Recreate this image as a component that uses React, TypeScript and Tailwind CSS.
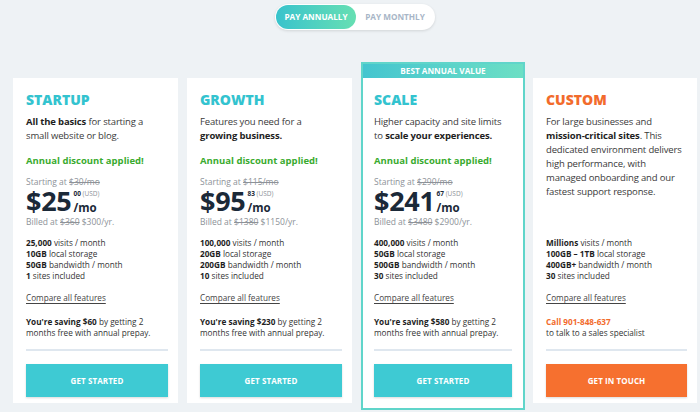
import React from 'react';

type Plan = {
  name: string;
  color: 'teal' | 'orange';
  desc: React.ReactNode;
  price?: { was: string; dollars: string; cents: string; billedWas: string; billed: string };
  features: [string, string][];
  footer: React.ReactNode;
  cta: string;
  featured?: boolean;
};

const plans: Plan[] = [
  {
    name: 'STARTUP',
    color: 'teal',
    desc: (
      <>
        <b className="font-bold text-[#1e1e1e]">All the basics</b> for starting a small website or blog.
      </>
    ),
    price: { was: '$30/mo', dollars: '$25', cents: '00', billedWas: '$360', billed: '$300/yr.' },
    features: [
      ['25,000', 'visits / month'],
      ['10GB', 'local storage'],
      ['50GB', 'bandwidth / month'],
      ['1', 'sites included'],
    ],
    footer: (
      <>
        <b className="font-bold text-[#1e1e1e]">You're saving $60</b> by getting 2 months free with annual prepay.
      </>
    ),
    cta: 'GET STARTED',
  },
  {
    name: 'GROWTH',
    color: 'teal',
    desc: (
      <>
        Features you need for a
        <br />
        <b className="font-bold text-[#1e1e1e]">growing business.</b>
      </>
    ),
    price: { was: '$115/mo', dollars: '$95', cents: '83', billedWas: '$1380', billed: '$1150/yr.' },
    features: [
      ['100,000', 'visits / month'],
      ['20GB', 'local storage'],
      ['200GB', 'bandwidth / month'],
      ['10', 'sites included'],
    ],
    footer: (
      <>
        <b className="font-bold text-[#1e1e1e]">You're saving $230</b> by getting 2 months free with annual prepay.
      </>
    ),
    cta: 'GET STARTED',
  },
  {
    name: 'SCALE',
    color: 'teal',
    featured: true,
    desc: (
      <>
        Higher capacity and site limits to <b className="font-bold text-[#1e1e1e]">scale your experiences.</b>
      </>
    ),
    price: { was: '$290/mo', dollars: '$241', cents: '67', billedWas: '$3480', billed: '$2900/yr.' },
    features: [
      ['400,000', 'visits / month'],
      ['50GB', 'local storage'],
      ['500GB', 'bandwidth / month'],
      ['30', 'sites included'],
    ],
    footer: (
      <>
        <b className="font-bold text-[#1e1e1e]">You're saving $580</b> by getting 2 months free with annual prepay.
      </>
    ),
    cta: 'GET STARTED',
  },
  {
    name: 'CUSTOM',
    color: 'orange',
    desc: (
      <>
        For large businesses and <b className="font-bold text-[#1e1e1e]">mission-critical sites</b>. This dedicated
        environment delivers high performance, with managed onboarding and our fastest support response.
      </>
    ),
    features: [
      ['Millions', 'visits / month'],
      ['100GB – 1TB', 'local storage'],
      ['400GB+', 'bandwidth / month'],
      ['30', 'sites included'],
    ],
    footer: (
      <>
        <b className="font-bold text-[#f26b2c]">Call 901-848-637</b>
        <br />
        to talk to a sales specialist
      </>
    ),
    cta: 'GET IN TOUCH',
  },
];

const PlanBody = ({ plan }: { plan: Plan }) => {
  const orange = plan.color === 'orange';
  return (
    <>
      <div>
        <h2
          className={`text-[14px] font-extrabold leading-[20px] ${
            orange ? 'text-[#f26b2c]' : 'text-[#33c3cf]'
          }`}
        >
          {plan.name}
        </h2>
        <p className="mt-[5px] text-[9.5px] leading-[14px] tracking-[-0.15px] text-[#3a3a3a]">{plan.desc}</p>
        {plan.price && (
          <>
            <p className="mt-[11px] text-[9.5px] font-bold leading-[14px] text-[#3aab2f]">Annual discount applied!</p>
            <p className="mt-[8px] text-[8.5px] leading-[12px] text-[#8d9298]">
              Starting at <span className="line-through">{plan.price.was}</span>
            </p>
            <div className="-mt-[1px] flex h-[28px] items-start text-[#1b2938]">
              <span className="text-[27px] font-bold leading-[28px] tracking-[-0.3px]">{plan.price.dollars}</span>
              <div className="ml-[2px] flex flex-col">
                <span className="mt-[3px] text-[6.5px] leading-[8px]">
                  <b className="font-bold">{plan.price.cents}</b>{' '}
                  <span className="text-[#8d9298]">(USD)</span>
                </span>
                <span className="mt-[3px] text-[11.5px] font-bold leading-[13px]">/mo</span>
              </div>
            </div>
            <p className="mt-[1px] text-[8.5px] leading-[12px] text-[#8d9298]">
              Billed at <span className="line-through">{plan.price.billedWas}</span> {plan.price.billed}
            </p>
          </>
        )}
      </div>
      <div className="mt-auto">
        <ul className="text-[8.2px] leading-[11px] text-[#333]">
          {plan.features.map(([b, rest]) => (
            <li key={rest}>
              <b className="font-bold text-[#1e1e1e]">{b}</b> {rest}
            </li>
          ))}
        </ul>
        <a className="mt-[11px] block text-[8.2px] leading-[11px] text-[#444] underline underline-offset-[1.5px]">
          Compare all features
        </a>
        <p className="mt-[13px] text-[8.2px] leading-[11px] text-[#333]">{plan.footer}</p>
        <div className="mt-[11px] h-[2px] bg-[#dfe7ef]" />
        <button
          className={`mt-[13px] flex h-[33px] w-full items-center justify-center text-[8px] font-bold tracking-[0.1px] text-white shadow-[0_1px_2px_rgba(0,0,0,0.15)] ${
            orange ? 'bg-[#f6702f]' : 'bg-[#3ecad3]'
          }`}
        >
          {plan.cta}
        </button>
      </div>
    </>
  );
};

const PlanCard = ({ plan, width }: { plan: Plan; width: string }) => {
  if (plan.featured) {
    return (
      <div className={`${width} flex h-[348px] flex-col border-2 border-[#60d5ca] bg-white`}>
        <div className="flex h-[14px] items-center justify-center bg-gradient-to-r from-[#44c5cf] to-[#6cdfc4] text-[8.2px] font-bold text-white">
          BEST ANNUAL VALUE
        </div>
        <div className="flex flex-1 flex-col px-[11px] pb-[11px] pt-[12px]">
          <PlanBody plan={plan} />
        </div>
      </div>
    );
  }
  return (
    <div className={`${width} mt-[16px] flex h-[325px] flex-col bg-white pb-[6px] pl-[13px] pr-[10px] pt-[12px]`}>
      <PlanBody plan={plan} />
    </div>
  );
};

export default function App() {
  return (
    <div
      className="h-[412px] w-[700px] overflow-hidden bg-[#eef2f5]"
      style={{ fontFamily: '"Open Sans", "Noto Sans", sans-serif' }}
    >
      <div className="flex justify-center pt-[4px]">
        <div className="ml-[10px] flex h-[26px] w-[160px] items-center rounded-full bg-white p-[1px] shadow-[0_1px_3px_rgba(0,0,0,0.12)]">
          <div className="flex h-full w-[80px] items-center justify-center rounded-full bg-gradient-to-r from-[#38c3cc] to-[#66dfb2] text-[8.2px] font-bold text-white">
            PAY ANNUALLY
          </div>
          <div className="flex h-full flex-1 items-center justify-center text-[8.2px] font-bold text-[#a8b6c7]">
            PAY MONTHLY
          </div>
        </div>
      </div>
      <div className="mt-[32px] flex items-start gap-[9px] pl-[13px]">
        <PlanCard plan={plans[0]} width="w-[165px]" />
        <PlanCard plan={plans[1]} width="w-[165px]" />
        <PlanCard plan={plans[2]} width="w-[164px]" />
        <div className="-ml-[1px]">
          <PlanCard plan={plans[3]} width="w-[164px]" />
        </div>
      </div>
    </div>
  );
}
